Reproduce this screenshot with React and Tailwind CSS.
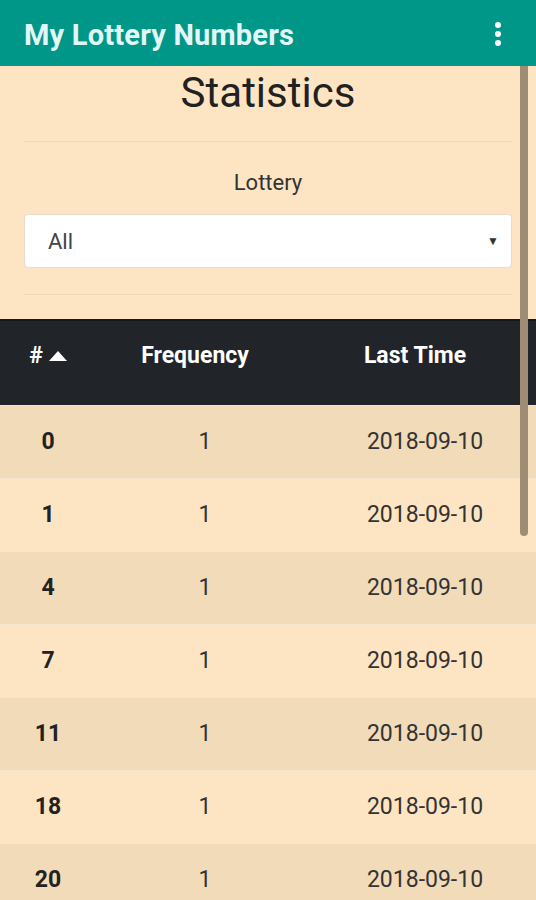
const rows = [
    { n: '0', f: '1', d: '2018-09-10' },
    { n: '1', f: '1', d: '2018-09-10' },
    { n: '4', f: '1', d: '2018-09-10' },
    { n: '7', f: '1', d: '2018-09-10' },
    { n: '11', f: '1', d: '2018-09-10' },
    { n: '18', f: '1', d: '2018-09-10' },
    { n: '20', f: '1', d: '2018-09-10' },
];

const App = () => {
    return (
        <div className="h-[900px] overflow-hidden bg-[#fde5c4] font-['Roboto',sans-serif] relative">
            {/* App bar */}
            <div className="h-[66px] bg-[#009688] flex items-center justify-between pl-6 pr-[35px] pt-[6px]">
                <h1 className="text-[29px] font-bold text-[#e3f8f6] tracking-[0.2px]">My Lottery Numbers</h1>
                <div className="flex flex-col gap-[3px] -mt-[4px]">
                    <span className="w-[6px] h-[6px] rounded-full bg-white"></span>
                    <span className="w-[6px] h-[6px] rounded-full bg-white"></span>
                    <span className="w-[6px] h-[6px] rounded-full bg-white"></span>
                </div>
            </div>

            {/* Filters */}
            <div className="px-6">
                <h2 className="text-center text-[42px] leading-[52px] text-[#212121] pt-[1px]">Statistics</h2>
                <hr className="mt-[22px] border-t border-[#efd9b9]" />
                <div className="text-center text-[22px] text-[#333] mt-[29px] leading-[24px]">Lottery</div>
                <div className="mt-[19px] h-[54px] bg-white rounded-[4px] border border-[#e8dccb] flex items-center justify-between pl-[23px] pr-[12px]">
                    <span className="text-[22px] text-[#444]">All</span>
                    <span className="text-[12px] text-[#333]">▼</span>
                </div>
                <hr className="mt-[26px] border-t border-[#efd9b9]" />
            </div>

            {/* Table */}
            <div className="mt-[24px]">
                <div className="grid grid-cols-[96px_218px_1fr] h-[86px] bg-[#212529] border-t-2 border-[#16181b] items-center text-white font-bold text-[23px] pb-[14px]">
                    <div className="flex items-center justify-center gap-[6px]">
                        <span>#</span>
                        <span className="w-0 h-0 border-l-[9px] border-r-[9px] border-b-[10px] border-l-transparent border-r-transparent border-b-white"></span>
                    </div>
                    <div className="text-center pr-[20px]">Frequency</div>
                    <div className="text-center pr-[20px]">Last Time</div>
                </div>
                {rows.map((r, i) => (
                    <div
                        key={r.n}
                        className={
                            'grid grid-cols-[96px_218px_1fr] h-[73px] items-center text-[23px] text-[#333] border-t border-[#f6e5cd] ' +
                            (i % 2 === 0 ? 'bg-[#f1dbb9]' : 'bg-[#fde5c4]')
                        }
                    >
                        <div className="text-center font-bold text-[#222]">{r.n}</div>
                        <div className="text-center">{r.f}</div>
                        <div className="text-center">{r.d}</div>
                    </div>
                ))}
            </div>

            {/* Scrollbar */}
            <div className="absolute top-[66px] right-[8px] w-[8px] h-[470px] rounded-b-full bg-[#9f8c74]"></div>
        </div>
    );
};

export default App;
